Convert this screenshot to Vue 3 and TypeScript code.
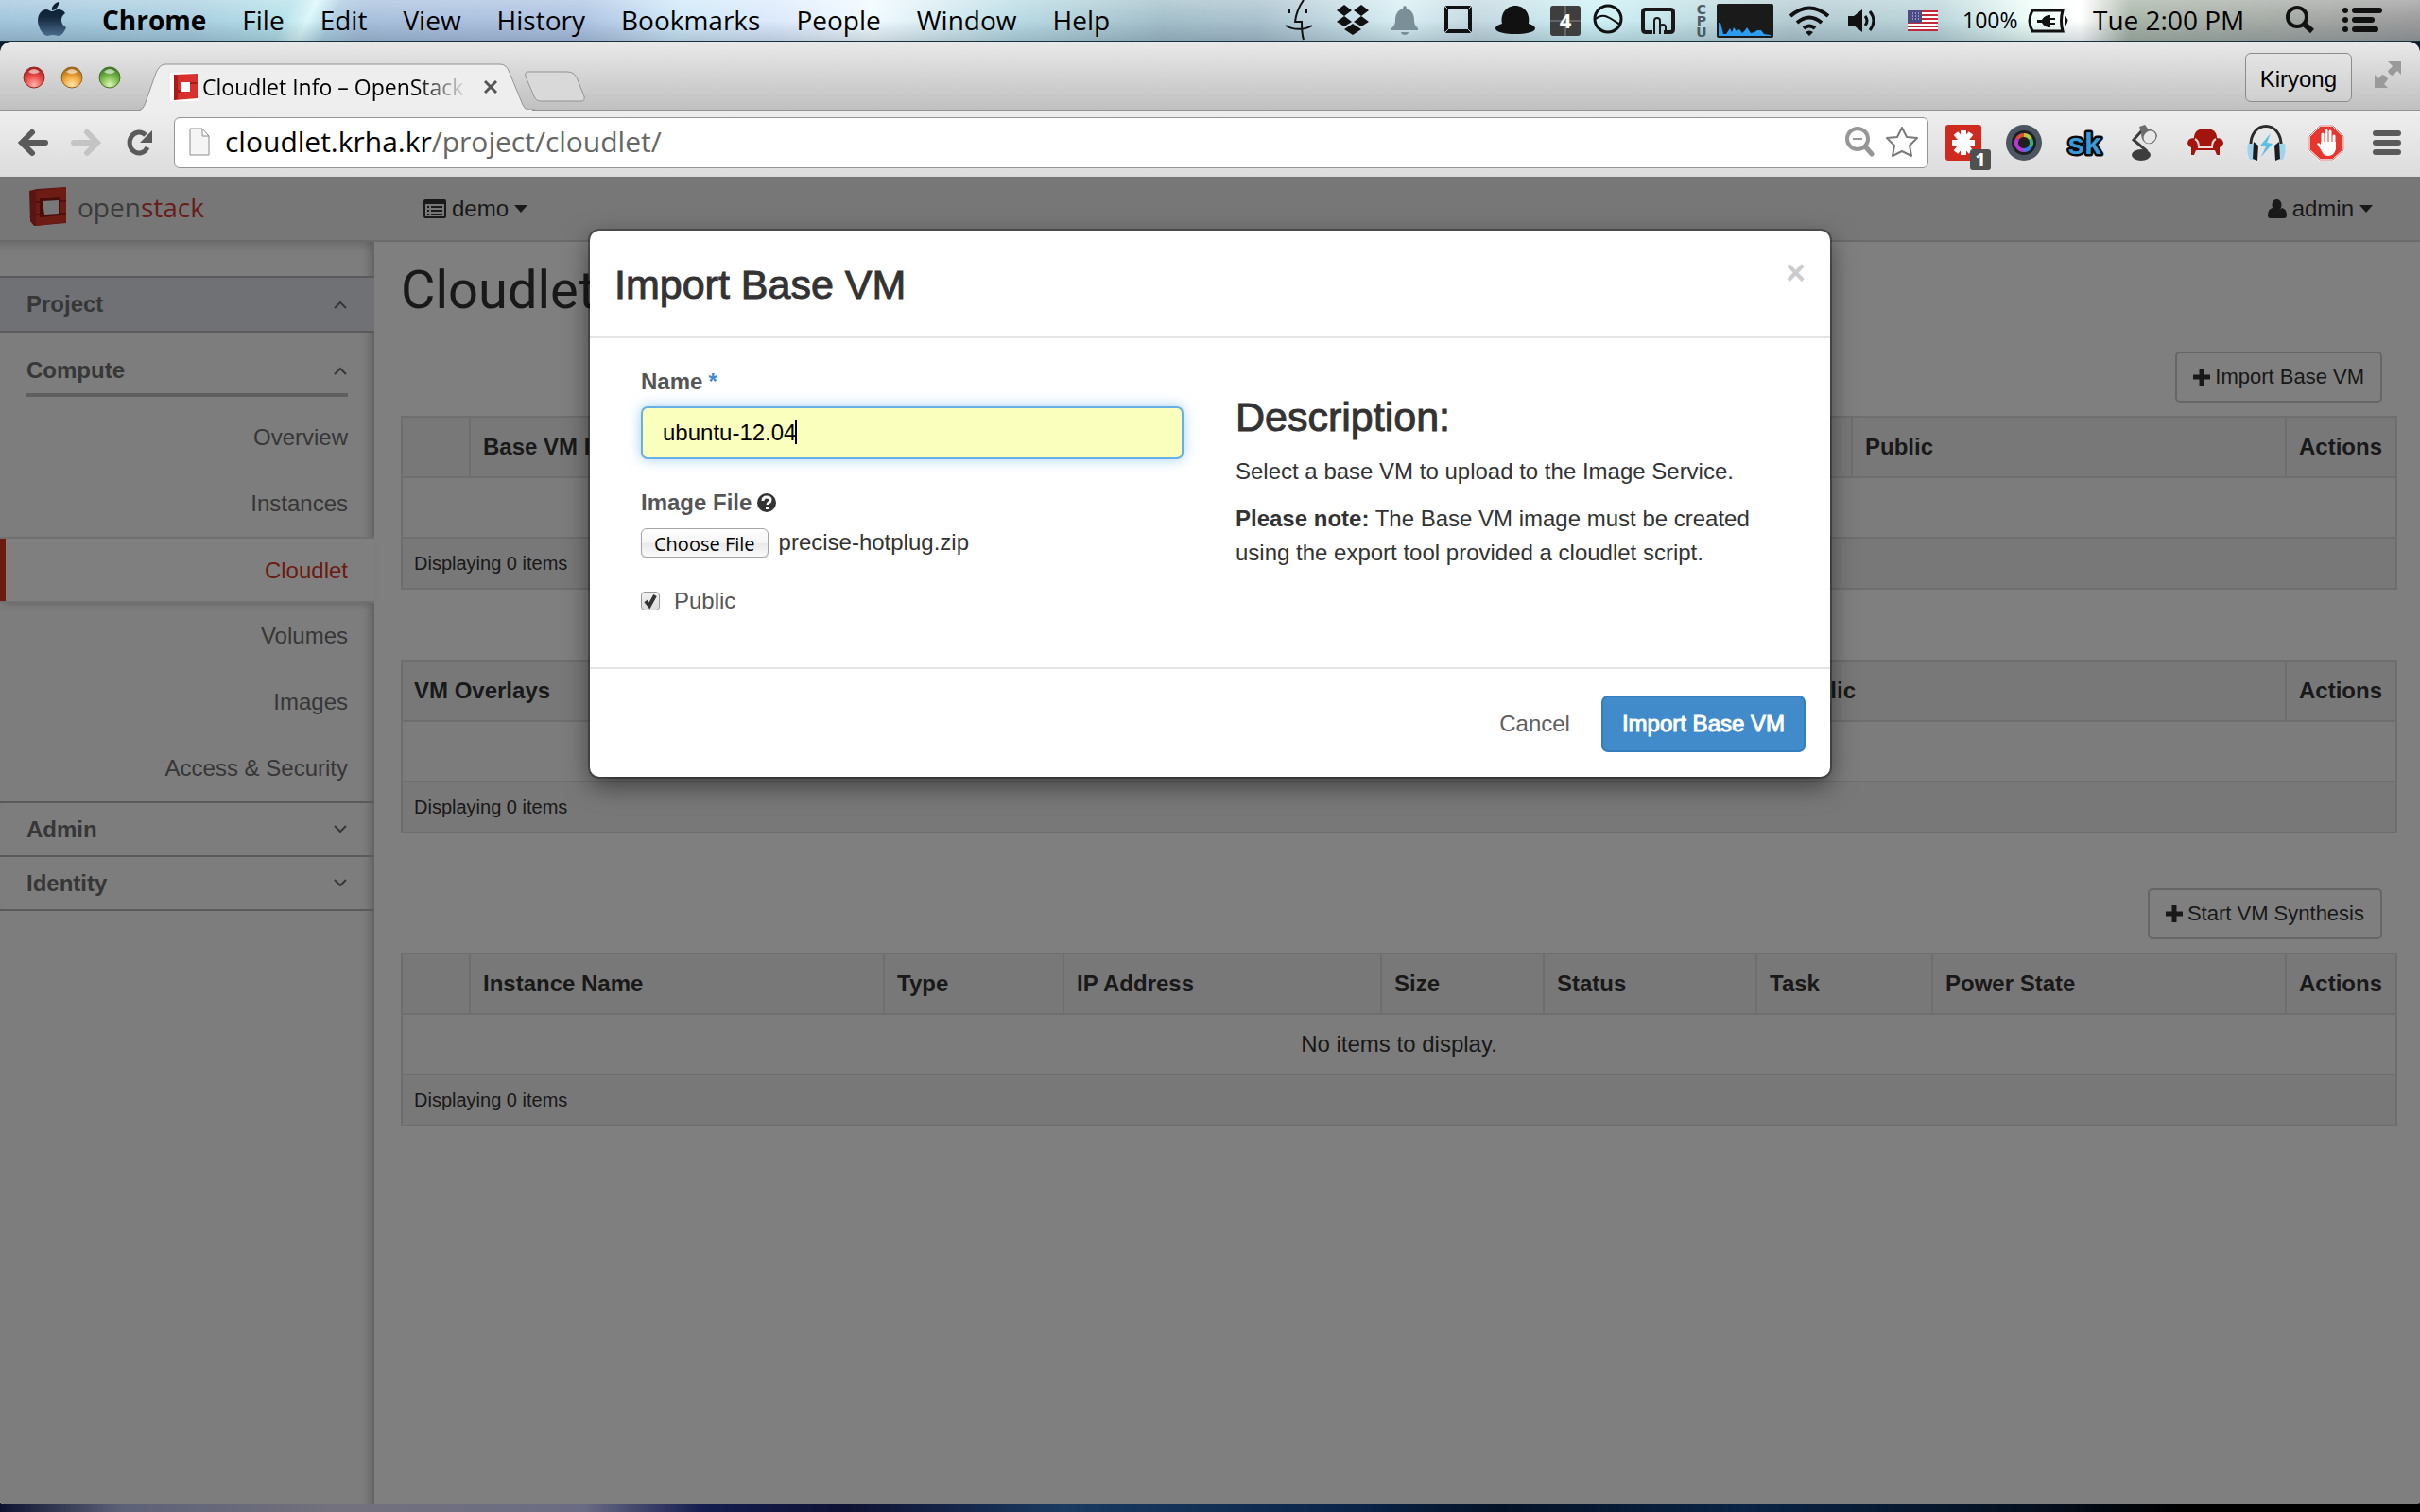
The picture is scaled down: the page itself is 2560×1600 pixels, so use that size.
<script setup lang="ts">
import { ref } from 'vue'

interface Column {
  label: string
  width?: number
}

interface DataTable {
  id: string
  action?: string
  message?: string
  columns: Column[]
}

const menus: string[] = ['File', 'Edit', 'View', 'History', 'Bookmarks', 'People', 'Window', 'Help']

const links: string[] = ['Overview', 'Instances', 'Cloudlet', 'Volumes', 'Images', 'Access & Security']
const activeLink = ref('Cloudlet')

const tables: DataTable[] = [
  {
    id: 'base',
    action: 'Import Base VM',
    columns: [
      { label: '', width: 70 },
      { label: 'Base VM Info' },
      { label: 'Public', width: 459 },
      { label: 'Actions', width: 117 },
    ],
  },
  {
    id: 'overlays',
    columns: [{ label: 'VM Overlays' }, { label: 'Public', width: 541 }, { label: 'Actions', width: 117 }],
  },
  {
    id: 'instances',
    action: 'Start VM Synthesis',
    message: 'No items to display.',
    columns: [
      { label: '', width: 70 },
      { label: 'Instance Name' },
      { label: 'Type', width: 190 },
      { label: 'IP Address', width: 336 },
      { label: 'Size', width: 172 },
      { label: 'Status', width: 225 },
      { label: 'Task', width: 186 },
      { label: 'Power State', width: 374 },
      { label: 'Actions', width: 117 },
    ],
  },
]

const vmName = ref('ubuntu-12.04')
const fileName = ref('precise-hotplug.zip')
const isPublic = ref(true)
const filePicker = ref<HTMLInputElement | null>(null)

function pickFile(): void {
  filePicker.value?.click()
}

function onFile(event: Event): void {
  const files = (event.target as HTMLInputElement).files
  if (files && files.length > 0) fileName.value = files[0].name
}
</script>

<template>
  <div class="desktop">
    <header class="menubar">
      <svg class="apple" width="108" height="43" viewBox="0 0 108 43" aria-hidden="true">
        <defs>
          <linearGradient id="appleFill" x1="0" y1="0" x2="0" y2="1">
            <stop offset="0" stop-color="#0b1d30" />
            <stop offset="0.45" stop-color="#13283d" />
            <stop offset="1" stop-color="#4a6c8c" />
          </linearGradient>
        </defs>
        <path fill="url(#appleFill)" d="M62 2c1 4-3 9-7 9-1-4 3-8 7-9zM55 12c2 0 4-2 7-2 3 0 5 1 7 4-6 4-5 12 1 15-2 5-5 9-8 9-2 0-4-1-6-1-3 0-4 1-6 1-4 0-10-9-10-16 0-8 5-12 9-12 2 0 4 2 6 2z" />
      </svg>
      <nav class="menus">
        <span class="app-name">Chrome</span>
        <span v-for="menu in menus" :key="menu">{{ menu }}</span>
      </nav>
      <div class="status">
        <svg width="52" height="43" viewBox="1350 0 52 43" fill="none" stroke="#111" stroke-width="2">
          <path d="M1379 0c-5 7-8 14-9 23h7c0 7 0 13 2 19M1364 9v5M1382 9v5M1360 27c8 5 20 5 28 0" />
        </svg>
        <svg width="58" height="43" viewBox="1402 0 58 43" fill="#111">
          <path d="M1422 5l8 6-8 6-8-6zM1440 5l8 6-8 6-8-6zM1422 17l8 6-8 5-8-5zM1440 17l8 6-8 5-8-5zM1431 25l9 6-9 6-9-6z" />
        </svg>
        <svg width="54" height="43" viewBox="1460 0 54 43" fill="#7b8f99">
          <path d="M1486 6c1 0 2 1 2 3 6 2 8 7 8 12 0 4 1 6 4 9v2h-28v-2c3-3 4-5 4-9 0-5 2-10 8-12 0-2 1-3 2-3zM1482 34h8c0 4-8 4-8 0z" />
        </svg>
        <svg width="56" height="43" viewBox="1514 0 56 43" fill="none" stroke="#111" stroke-width="4">
          <rect x="1530" y="8" width="25" height="25" rx="1" />
          <path d="M1528 6l5 5M1557 6l-5 5M1528 35l5-5M1557 35l-5-5" stroke="#b9cdd4" stroke-width="1" />
        </svg>
        <svg width="62" height="43" viewBox="1570 0 62 43" fill="#111">
          <path d="M1589 25c-2-10 4-19 14-19s16 9 14 19c4 1 7 3 7 5 0 8-42 8-42 0 0-2 3-4 7-5z" />
        </svg>
        <svg width="48" height="43" viewBox="1632 0 48 43">
          <rect x="1640" y="6" width="32" height="32" rx="3" fill="#3e3e3e" />
          <path d="M1656 6v32M1640 22h32" stroke="#8a8a8a" />
          <text x="1656" y="30" text-anchor="middle" fill="#fff" font-family="Open Sans, sans-serif" font-weight="700" font-size="22">4</text>
        </svg>
        <svg width="46" height="43" viewBox="1680 0 46 43" fill="none" stroke="#111" stroke-width="3">
          <circle cx="1701" cy="20" r="14" />
          <path d="M1688 20c8-8 16 0 26 6" stroke-width="2" />
        </svg>
        <svg width="56" height="43" viewBox="1726 0 56 43" fill="none" stroke="#1a1718" stroke-width="4">
          <path d="M1748 34h-7q-3 0-3-3v-18q0-3 3-3h26q3 0 3 3v18q0 3-3 3h-7" />
          <path d="M1750 36v-14q0-3 3-3t3 3v14v-7q0-3 3-3t3 3v7" stroke-width="2" />
        </svg>
        <svg width="30" height="43" viewBox="1782 0 30 43" fill="#4f5c62" font-family="DejaVu Sans, sans-serif" font-weight="700" font-size="14" text-anchor="middle">
          <text x="1800" y="15">C</text>
          <text x="1800" y="27">P</text>
          <text x="1800" y="39">U</text>
        </svg>
        <svg width="72" height="43" viewBox="1812 0 72 43">
          <rect x="1816" y="4" width="60" height="36" rx="2" fill="#1a1a1a" />
          <path fill="#2a9df0" d="M1818 38v-14h2l3 12h3l4-6 2 4 2-5 3 4 3-2 3 4 3-3 2-3 4 6 4-1 3-2h4l3 4 7 1v1z" />
        </svg>
        <svg width="62" height="43" viewBox="1884 0 62 43" fill="none" stroke="#111" stroke-width="4">
          <path d="M1894 17q20-17 40 0M1901 24q13-11 26 0M1908 30q6-5 12 0" />
          <path d="M1910 34q4-3 8 0l-4 4z" fill="#111" stroke="none" />
        </svg>
        <svg width="54" height="43" viewBox="1946 0 54 43">
          <path fill="#111" d="M1955 17h6l9-7v24l-9-7h-6z" />
          <path fill="none" stroke="#111" stroke-width="3" d="M1973 17q4 5 0 10M1978 12q8 10 0 20" />
        </svg>
        <svg width="68" height="43" viewBox="2000 0 68 43">
          <rect x="2018" y="11" width="32" height="22" fill="#fff" />
          <path d="M2018 12h32M2018 16h32M2018 20h32M2018 24h32M2018 28h32M2018 32h32" stroke="#c22a3a" stroke-width="2" />
          <rect x="2018" y="11" width="15" height="13" fill="#4a4d85" />
          <path d="M2020 14h12M2020 17h12M2020 20h12" stroke="#dfe1f2" stroke-dasharray="1 2" />
        </svg>
        <span class="percent">100%</span>
        <svg width="60" height="43" viewBox="2140 0 60 43">
          <path fill="none" stroke="#111" stroke-width="3" d="M2150 11h32q-3 11 0 22h-32q-6-11 0-22z" />
          <path fill="#111" d="M2184 17q7 5 0 10zM2155 21h5q2-4 7-5h2v3h5v2h-5v3h5v2h-5v3h-2q-5-1-7-5h-5z" />
        </svg>
        <span class="clock">Tue 2:00 PM</span>
        <svg width="60" height="43" viewBox="2400 0 60 43" fill="none" stroke="#111">
          <circle cx="2430" cy="18" r="10" stroke-width="4" />
          <path d="M2437 25l9 8" stroke-width="6" />
        </svg>
        <svg width="100" height="43" viewBox="2460 0 100 43" fill="none" stroke="#111" stroke-width="6" stroke-linecap="round">
          <path d="M2481 11h0M2491 11h26M2481 21h0M2491 21h18M2481 31h0M2491 31h22" />
        </svg>
      </div>
    </header>

    <div class="window">
      <div class="tabstrip">
        <svg width="148" height="73" viewBox="0 0 148 73" aria-hidden="true">
          <defs>
            <radialGradient id="lightRed" cx="0.5" cy="0.85" r="0.8"><stop offset="0" stop-color="#ffb3ae" /><stop offset="0.5" stop-color="#f0504b" /><stop offset="1" stop-color="#a8201c" /></radialGradient>
            <radialGradient id="lightAmber" cx="0.5" cy="0.85" r="0.8"><stop offset="0" stop-color="#ffe6a8" /><stop offset="0.5" stop-color="#f2a93e" /><stop offset="1" stop-color="#a8690f" /></radialGradient>
            <radialGradient id="lightGreen" cx="0.5" cy="0.85" r="0.8"><stop offset="0" stop-color="#dcf5b8" /><stop offset="0.5" stop-color="#80c052" /><stop offset="1" stop-color="#3f7d22" /></radialGradient>
          </defs>
          <circle cx="36" cy="38" r="11" fill="url(#lightRed)" stroke="#8f2a26" />
          <circle cx="76" cy="38" r="11" fill="url(#lightAmber)" stroke="#8f6226" />
          <circle cx="116" cy="38" r="11" fill="url(#lightGreen)" stroke="#47702c" />
          <path fill="#fff" fill-opacity="0.6" d="M30 32q6-6 12 0-6 4-12 0zM70 32q6-6 12 0-6 4-12 0zM110 32q6-6 12 0-6 4-12 0z" />
        </svg>
        <div class="tab">
          <svg class="tab-shape" width="418" height="50" viewBox="0 0 418 50" aria-hidden="true">
            <path fill="#eee" stroke="#949494" d="M-1 49h1q3 0 5-5l12-34q4-9 10-9h354q7 0 10 9l14 34q2 5 6 5h10" />
            <path fill="#eee" d="M1 50h414v-1h-414z" />
          </svg>
          <svg class="favicon" width="30" height="30" viewBox="0 0 30 30" aria-hidden="true">
            <path fill="#fff" d="M0 0h30v30h-30z" />
            <path fill="#d8302c" d="M4 2l25-1v26l-25 2z" />
            <path fill="#a81d1c" d="M4 2l4 1v25l-4 1zM8 18h4v3h-4zM20 10h9v2h-9z" />
            <path fill="#fff" d="M12 10h9v10h-9z" />
          </svg>
          <span class="tab-title">Cloudlet Info – OpenStack</span>
          <button class="tab-close" type="button" aria-label="Close tab">
            <svg width="14" height="14" viewBox="0 0 14 14"><path d="M1 1l12 12M13 1L1 13" stroke="#555" stroke-width="3" /></svg>
          </button>
        </div>
        <button class="new-tab" type="button" aria-label="New tab">
          <svg width="66" height="34" viewBox="0 0 66 34"><path fill="#d9d9d9" stroke="#939393" stroke-width="1" d="M4 1h42q7 0 10 6l8 20q1 5-3 5h-43q-5 0-7-5l-9-21q-1-5 2-5z" /></svg>
        </button>
        <div class="strip-end">
          <button class="profile" type="button">Kiryong</button>
          <svg width="28" height="28" viewBox="0 0 28 28" fill="#9a9a9a" aria-hidden="true">
            <path d="M14 0h14v14l-4-4-5 5q-4-1-5-5l5-5zM0 28v-14l4 4 4-4q5 1 6 5l-4 5 4 4z" />
          </svg>
        </div>
      </div>

      <div class="toolbar">
        <svg width="164" height="70" viewBox="0 0 164 70" fill="none" stroke-width="6" stroke-linecap="round" aria-hidden="true">
          <path stroke="#5a5a5a" d="M48 34h-24M34 23l-11 11 11 11" />
          <path stroke="#c4c4c4" d="M78 34h24M92 23l11 11-11 11" />
          <path stroke="#5a5a5a" stroke-width="5" stroke-linecap="butt" d="M156 39a10 11 0 1 1-2-13" />
          <path fill="#5a5a5a" d="M161 21v13h-13z" />
        </svg>
        <label class="omnibox">
          <svg width="22" height="30" viewBox="0 0 22 30" aria-hidden="true"><path fill="#f5f5f5" stroke="#8c8c8c" d="M1 1h13l7 8v20h-20zM14 1v8h7" /></svg>
          <span class="url"><span class="host">cloudlet.krha.kr</span>/project/cloudlet/</span>
          <svg class="omni-icons" width="80" height="32" viewBox="0 0 80 32" fill="none" aria-hidden="true">
            <circle cx="14" cy="13" r="11" stroke="#969696" stroke-width="4" />
            <path d="M9 13h10" stroke="#969696" stroke-width="2" />
            <path d="M22 21l7 8" stroke="#969696" stroke-width="5" stroke-linecap="round" />
            <path d="M61 1l5 10 11 1-8 8 2 11-10-5-10 5 2-11-8-8 11-1z" stroke="#7a7a7a" stroke-width="2" stroke-linejoin="round" />
          </svg>
        </label>
        <svg class="extensions" width="512" height="70" viewBox="2045 117 512 70" aria-hidden="true">
          <rect x="2058" y="132" width="38" height="38" rx="3" fill="#cf2a20" />
          <path d="M2077 138v26M2065 151h24M2069 141l16 20M2085 141l-16 20" stroke="#fff" stroke-width="6" />
          <rect x="2084" y="158" width="22" height="22" rx="3" fill="#505050" />
          <text x="2095" y="176" text-anchor="middle" fill="#fff" font-family="Open Sans, sans-serif" font-weight="700" font-size="20">1</text>
          <circle cx="2141" cy="151" r="19" fill="#4c5560" />
          <circle cx="2141" cy="151" r="13" fill="#1d1f24" />
          <g fill="none" stroke-width="4">
            <path stroke="#e04a3a" d="M2134 147a8 8 0 0 1 7-4" />
            <path stroke="#b9c93a" d="M2141 143a8 8 0 0 1 7 4" />
            <path stroke="#32b46a" d="M2148 147a8 8 0 0 1 0 8" />
            <path stroke="#3a7be0" d="M2148 155a8 8 0 0 1-7 4" />
            <path stroke="#b43ad0" d="M2141 159a8 8 0 0 1-7-12" />
          </g>
          <text x="2205" y="163" text-anchor="middle" fill="#3a9ad9" stroke="#0a0a0a" stroke-width="5" stroke-linejoin="round" paint-order="stroke" font-family="Liberation Sans, sans-serif" font-weight="700" font-size="32">sk</text>
          <ellipse cx="2265" cy="164" rx="10" ry="6" fill="#3d3d3d" />
          <path d="M2265 162l5-3-13-11 9-10" fill="none" stroke="#3d3d3d" stroke-width="3" />
          <path fill="#6c6c6c" d="M2263 134l6-2 3 4q10 2 10 8-1 4-4 7-6 3-10-1-3-3-3-10z" />
          <ellipse cx="2274" cy="145" rx="6" ry="7" fill="#e8e8e8" transform="rotate(40 2274 145)" />
          <path fill="#a3140c" d="M2321 146q0-10 12-10t12 10q7 0 7 6-1 3-4 4v8h-3l-2-5h-20l-2 5h-3v-8q-3-1-4-4 0-6 7-6z" />
          <path d="M2322 147q4 2 4 9h14q0-7 4-9" fill="none" stroke="#f1d9d7" stroke-width="2" />
          <path d="M2381 156c-2-30 34-30 32 0" fill="none" stroke="#2b2b2b" stroke-width="3" />
          <path fill="#9fd3ee" d="M2378 152h6v17h-4q-4-8-2-17zM2411 152h6q2 9-2 17h-4z" />
          <path fill="#1c1c1c" d="M2384 150l5 4-1 16-5-2zM2411 150l-5 4 1 16 5-2z" />
          <path fill="#5bbfe6" d="M2402 141l-11 13 6 1-5 11 12-14-6-1z" />
          <path fill="#e8352e" stroke="#fff" stroke-width="2" d="M2454 133h14l11 11v15l-11 10h-14l-11-10v-15z" />
          <path d="M2454 133h14l11 11v15l-11 10h-14l-11-10v-15z" fill="none" stroke="#d8776f" />
          <path d="M2457 154v-12M2461 152v-14M2465 152v-13M2469 154v-10" stroke="#fff" stroke-width="3" stroke-linecap="round" />
          <path fill="#fff" d="M2455 150h16v8q-2 7-8 7-5 0-7-5l-5-8q2-2 4 1z" />
          <path d="M2513 141h24M2513 151h24M2513 161h24" stroke="#5a5a5a" stroke-width="6" stroke-linecap="round" />
        </svg>
      </div>

      <div class="page">
        <div class="navbar">
          <a class="brand" href="#">
            <svg width="42" height="42" viewBox="0 0 42 42" aria-hidden="true">
              <path fill="#8a8a8a" d="M1 31l6-2v9z" />
              <path fill="#b32a22" d="M1 4l8-2 31-2v38l-34 3-4-5z" />
              <path fill="#d8362b" d="M8 4l32-4v37l-32 4z" />
              <path fill="#a81f18" d="M8 15h6v2h-6zM8 28h6v2h-6zM32 14h8v2h-8zM32 27h8v2h-8z" />
              <path fill="#8f1b15" d="M12 12l22-2v20l-22 2z" />
              <path fill="#f0f0f0" d="M15 15l17-1v14l-15 1z" />
            </svg>
            <span class="brand-name">open<span class="brand-red">stack</span></span>
          </a>
          <button class="nav-menu project-menu" type="button">
            <svg width="24" height="20" viewBox="0 0 24 20" aria-hidden="true">
              <path fill="#333" fill-rule="evenodd" d="M2 0h20q2 0 2 2v16q0 2-2 2H2q-2 0-2-2V2q0-2 2-2zM2 5v13h20V5z" />
              <path d="M4 8h2M8 8h12M4 12h2M8 12h12M4 16h2M8 16h12" stroke="#333" stroke-width="2" />
            </svg>
            demo
            <span class="caret"></span>
          </button>
          <button class="nav-menu user-menu" type="button">
            <svg width="20" height="20" viewBox="0 0 20 20" fill="#333" aria-hidden="true">
              <path d="M10 0a5 6 0 1 1-1 0zM5 9q5 5 10 0 5 1 5 8 0 3-3 3H3q-3 0-3-3 0-7 5-8z" />
            </svg>
            admin
            <span class="caret"></span>
          </button>
        </div>

        <div class="columns">
          <aside class="sidebar">
            <button class="group open" type="button">
              Project
              <svg width="14" height="9" viewBox="0 0 14 9" fill="none" stroke="#6e6e6e" stroke-width="2"><path d="M1 8l6-6 6 6" /></svg>
            </button>
            <button class="panel" type="button">
              Compute
              <svg width="14" height="9" viewBox="0 0 14 9" fill="none" stroke="#6e6e6e" stroke-width="2"><path d="M1 8l6-6 6 6" /></svg>
            </button>
            <nav class="links">
              <a
                v-for="link in links"
                :key="link"
                href="#"
                :class="{ active: link === activeLink }"
                @click.prevent="activeLink = link"
              >{{ link }}</a>
            </nav>
            <button v-for="group in ['Admin', 'Identity']" :key="group" class="group" type="button">
              {{ group }}
              <svg width="14" height="9" viewBox="0 0 14 9" fill="none" stroke="#6e6e6e" stroke-width="2"><path d="M1 1l6 6 6-6" /></svg>
            </button>
          </aside>

          <main class="content">
            <h1>Cloudlet Info</h1>
            <section v-for="table in tables" :key="table.id" class="block">
              <div v-if="table.action" class="actions">
                <button class="btn-small" type="button">
                  <svg width="18" height="18" viewBox="0 0 18 18" aria-hidden="true"><path d="M9 0v18M0 9h18" stroke="#333" stroke-width="5" /></svg>
                  {{ table.action }}
                </button>
              </div>
              <table>
                <colgroup>
                  <col v-for="(column, i) in table.columns" :key="i" :style="column.width ? { width: column.width + 'px' } : {}" />
                </colgroup>
                <thead>
                  <tr>
                    <th v-for="(column, i) in table.columns" :key="i" scope="col">{{ column.label }}</th>
                  </tr>
                </thead>
                <tbody>
                  <tr>
                    <td :colspan="table.columns.length">{{ table.message }}</td>
                  </tr>
                </tbody>
                <tfoot>
                  <tr>
                    <td :colspan="table.columns.length">Displaying 0 items</td>
                  </tr>
                </tfoot>
              </table>
            </section>
          </main>
        </div>

        <div class="backdrop">
          <form class="modal" role="dialog" aria-labelledby="modal-title" @submit.prevent>
            <div class="modal-header">
              <h2 id="modal-title">Import Base VM</h2>
              <button class="close" type="button" aria-label="Close">×</button>
            </div>
            <div class="modal-body">
              <div class="fields">
                <label class="field-label" for="vm-name">Name <span class="required">*</span></label>
                <div class="text-field">
                  <input id="vm-name" v-model="vmName" type="text" />
                  <span class="cursor"></span>
                </div>
                <label class="field-label" for="vm-file">
                  Image File
                  <svg width="20" height="20" viewBox="0 0 20 20" aria-hidden="true">
                    <circle cx="10" cy="10" r="10" fill="#333" />
                    <path d="M6 8q0-4 4-4t4 3q0 2-2 3-1 1-1 2" fill="none" stroke="#fff" stroke-width="3" />
                    <path d="M9 14h3v3h-3z" fill="#fff" />
                  </svg>
                </label>
                <div class="file-row">
                  <input id="vm-file" ref="filePicker" type="file" hidden @change="onFile" />
                  <button class="choose" type="button" @click="pickFile">Choose File</button>
                  <span>{{ fileName }}</span>
                </div>
                <label class="check-row">
                  <span class="check">
                    <input v-model="isPublic" type="checkbox" />
                    <svg v-if="isPublic" width="20" height="20" viewBox="0 0 20 20" aria-hidden="true"><path d="M5 10l4 5 6-11" fill="none" stroke="#333" stroke-width="4" /></svg>
                  </span>
                  Public
                </label>
              </div>
              <div class="description">
                <h3>Description:</h3>
                <p>Select a base VM to upload to the Image Service.</p>
                <p><strong>Please note:</strong> The Base VM image must be created using the export tool provided a cloudlet script.</p>
              </div>
            </div>
            <div class="modal-footer">
              <button class="cancel" type="button">Cancel</button>
              <button class="primary" type="submit">Import Base VM</button>
            </div>
          </form>
        </div>
      </div>
    </div>
    <div class="wallpaper"></div>
  </div>
</template>

<style>
body {
  margin: 0;
}
</style>

<style scoped>
* {
  box-sizing: border-box;
}

svg {
  display: block;
  flex: none;
}

button {
  margin: 0;
  padding: 0;
  border: 0;
  background: none;
  color: inherit;
  font: inherit;
}

.desktop {
  display: flex;
  flex-direction: column;
  min-height: 100vh;
  background: #0c1a2e;
  color: #333;
  font: 24px/36px "Liberation Sans", Arial, sans-serif;
}

/* Menu bar */
.menubar {
  display: flex;
  height: 44px;
  border-bottom: 1px solid #16303c;
  background:
    linear-gradient(rgba(255, 255, 255, 0.25), rgba(255, 255, 255, 0) 50%, rgba(30, 50, 70, 0.18)),
    linear-gradient(115deg, transparent 12%, rgba(230, 255, 255, 0.8) 13%, transparent 14%),
    linear-gradient(90deg, #a3c6dd, #a9cfe0 8%, #b5e2ea 12%, #a8c0dc 15%, #aec3e2 24%, #cfe8f8 28%, #dceafc 32%, #f2fbff 36%, #b9dbe4 42%, #a3bfca 48%, #a9c1cd 52%, #d8eff4 58%, #c4d8e0 61%, #cdf1f6 66%, #b4cbd2 74%, #b9d4d9 80%, #effff9 84%, #fff 86%, #a9b5a8 88%, #a5aaa5 94%, #9c9c9c);
  color: #000;
  font: 28px/42px "Open Sans", "Noto Sans", sans-serif;
}

.menus {
  display: flex;
  gap: 38px;
}

.app-name {
  font-weight: 700;
}

.status {
  display: flex;
  margin-left: auto;
}

.percent {
  width: 72px;
  padding-left: 8px;
  font-size: 23px;
}

.clock {
  width: 200px;
  padding-left: 14px;
}

/* Browser chrome */
.window {
  display: flex;
  flex: 1;
  flex-direction: column;
  overflow: hidden;
  border-radius: 12px 12px 4px 4px;
}

.tabstrip {
  display: flex;
  height: 73px;
  border-bottom: 1px solid #949494;
  background: linear-gradient(#e9e9e9, #c0c0c0);
}

.tab {
  position: relative;
  display: flex;
  align-items: center;
  width: 418px;
  height: 50px;
  margin-top: 23px;
  padding-left: 32px;
}

.tab-shape {
  position: absolute;
  inset: 0;
}

.favicon,
.tab-title,
.tab-close {
  position: relative;
}

.tab-title {
  width: 282px;
  margin: 0 16px 0 4px;
  overflow: hidden;
  color: #000;
  font: 23px/32px "Open Sans", "Noto Sans", sans-serif;
  white-space: nowrap;
  mask-image: linear-gradient(90deg, #000 80%, transparent);
}

.new-tab {
  align-self: flex-start;
  margin: 31px 0 0 -12px;
}

.strip-end {
  display: flex;
  gap: 24px;
  align-items: flex-start;
  margin-left: auto;
  padding: 12px 20px 0 0;
}

.strip-end svg {
  margin-top: 9px;
}

.profile {
  height: 52px;
  padding: 4px 15px 0;
  border: 1px solid #8c8c8c;
  border-radius: 6px;
  background: linear-gradient(#e4e4e4, #cfcfcf);
  color: #000;
}

.toolbar {
  display: flex;
  align-items: center;
  height: 70px;
  padding-right: 3px;
  background: linear-gradient(#eee, #dcdcdc);
}

.omnibox {
  display: flex;
  flex: 1;
  align-items: center;
  height: 54px;
  margin: 0 5px 2px 20px;
  padding: 0 8px 2px 15px;
  border: 1px solid #949494;
  border-radius: 6px;
  background: #fff;
}

.url {
  margin-left: 16px;
  color: #666;
  font: 30px/42px "Open Sans", "Noto Sans", sans-serif;
}

.host {
  color: #000;
}

.omni-icons {
  margin-left: auto;
}

/* Page */
.page {
  position: relative;
  display: flex;
  flex: 1;
  flex-direction: column;
  background: #fff;
}

.navbar {
  display: flex;
  align-items: center;
  height: 69px;
  padding: 0 50px 0 30px;
  border-bottom: 2px solid #d4d4d4;
  background: #eee;
}

.brand {
  display: flex;
  gap: 10px;
  align-items: center;
  width: 418px;
  margin-bottom: 4px;
  color: #777;
  font-family: "Open Sans", sans-serif;
  font-size: 28px;
  text-decoration: none;
}

.brand-red {
  color: #d03a30;
}

.nav-menu {
  display: flex;
  gap: 6px;
  align-items: center;
}

.user-menu {
  margin-left: auto;
}

.caret {
  border: 7px solid transparent;
  border-top: 8px solid #333;
  border-bottom: 0;
}

.columns {
  display: flex;
  flex: 1;
}

.sidebar {
  display: flex;
  flex: none;
  flex-direction: column;
  width: 396px;
  padding-top: 36px;
  background: #fafafa;
  box-shadow:
    inset -2px 0 #ccc,
    inset -12px 0 10px -8px rgba(0, 0, 0, 0.25),
    inset 0 12px 10px -8px rgba(0, 0, 0, 0.15);
  color: #6e6e6e;
}

.group {
  display: flex;
  align-items: center;
  justify-content: space-between;
  height: 57px;
  padding: 0 29px 0 28px;
  border-top: 2px solid #b4b4b4;
  font-weight: 700;
}

.group:last-child {
  height: 59px;
  border-bottom: 2px solid #b4b4b4;
}

.group.open {
  height: 60px;
  border-bottom: 2px solid #b4b4b4;
  background: #dee2e8;
}

.panel {
  display: flex;
  align-items: center;
  justify-content: space-between;
  height: 68px;
  margin: 0 28px;
  padding-top: 16px;
  padding-right: 1px;
  border-bottom: 4px solid #bfbfbf;
  font-weight: 700;
}

.links {
  display: flex;
  flex-direction: column;
  margin-top: 8px;
}

.links a {
  height: 70px;
  padding-right: 28px;
  color: #6e6e6e;
  line-height: 70px;
  text-align: right;
  text-decoration: none;
}

.links a.active {
  border: solid #e0e0e0;
  border-width: 2px 0;
  background: linear-gradient(90deg, #d93622 6px, #fff 6px);
  box-shadow: 0 4px 8px -4px rgba(0, 0, 0, 0.25);
  color: #d93622;
  line-height: 68px;
}

.content {
  flex: 1;
  min-width: 0;
  padding: 20px 24px 0 28px;
}

h1 {
  margin: 0 0 34px;
  font: 400 56px/62px Roboto, sans-serif;
}

.block {
  margin-bottom: 58px;
}

.block:nth-of-type(1) {
  margin-bottom: 74px;
}

.actions {
  display: flex;
  justify-content: flex-end;
  padding: 0 16px 14px 0;
}

.btn-small {
  display: flex;
  gap: 5px;
  align-items: center;
  height: 54px;
  padding: 0 17px;
  border: 2px solid #ccc;
  border-radius: 5px;
  background: #fff;
  font-size: 22px;
}

table {
  width: 100%;
  border: 2px solid #ddd;
  border-spacing: 0;
  table-layout: fixed;
}

th {
  height: 64px;
  padding: 0 8px 0 13px;
  border-bottom: 2px solid #ddd;
  border-left: 2px solid #ddd;
  background: #f0f0f0;
  text-align: left;
}

th:first-child {
  padding-left: 12px;
  border-left: 0;
}

tbody td {
  height: 64px;
  padding: 0;
  border-bottom: 2px solid #ddd;
  background: #f9f9f9;
  text-align: center;
}

tfoot td {
  height: 52px;
  padding: 0 12px;
  background: #f0f0f0;
  font-size: 20px;
}

/* Modal */
.backdrop {
  position: absolute;
  inset: 0;
  display: flex;
  align-items: flex-start;
  justify-content: center;
  padding-top: 57px;
  background: rgba(0, 0, 0, 0.5);
}

.modal {
  width: 1312px;
  border-radius: 10px;
  background: #fff;
  box-shadow:
    0 0 0 2px rgba(0, 0, 0, 0.3),
    0 9px 27px rgba(0, 0, 0, 0.5);
}

.modal-header {
  display: flex;
  align-items: flex-start;
  justify-content: space-between;
  height: 114px;
  padding: 27px 26px 0;
  border-bottom: 2px solid #e5e5e5;
}

h2,
h3 {
  margin: 0;
  font-size: 43px;
  font-weight: 400;
  line-height: 60px;
  -webkit-text-stroke: 1px currentColor;
}

.close {
  color: #ccc;
  font-size: 36px;
  font-weight: 700;
}

.modal-body {
  display: flex;
  gap: 55px;
  height: 350px;
  padding: 28px 54px 0;
  border-bottom: 2px solid #e5e5e5;
}

.fields {
  display: flex;
  flex: none;
  flex-direction: column;
  width: 574px;
}

.field-label {
  display: flex;
  gap: 6px;
  align-items: center;
  color: #555;
  font-weight: 700;
}

.required {
  color: #428bca;
}

.text-field {
  position: relative;
  margin: 8px 0 28px;
}

.text-field input {
  display: block;
  width: 100%;
  height: 56px;
  padding: 0 21px;
  border: 2px solid #66afe9;
  border-radius: 7px;
  outline: 0;
  background: #faffbd;
  box-shadow: 0 0 14px rgba(102, 175, 233, 0.6);
  color: #000;
  font: inherit;
}

.cursor {
  position: absolute;
  top: 14px;
  left: 163px;
  width: 2px;
  height: 26px;
  background: #000;
}

.file-row {
  display: flex;
  gap: 11px;
  align-items: center;
  margin-top: 6px;
}

.choose {
  height: 31px;
  padding: 4px 13px 0;
  border: 1px solid #a5a5a5;
  border-radius: 6px;
  background: linear-gradient(#fff, #f4f4f4 50%, #e9e9e9 50%, #fafafa);
  box-shadow: 0 1px 1px rgba(0, 0, 0, 0.25);
  color: #000;
  font: 20px/24px "Open Sans", "Noto Sans", sans-serif;
}

.check-row {
  display: flex;
  gap: 15px;
  align-items: center;
  margin-top: 26px;
  color: #555;
}

.check {
  position: relative;
  display: block;
}

.check input {
  display: block;
  width: 20px;
  height: 20px;
  margin: 0;
  border: 1px solid #999;
  border-radius: 4px;
  background: linear-gradient(#f0f0f0, #ddd);
  appearance: none;
}

.check svg {
  position: absolute;
  inset: 0;
}

.description {
  flex: 1;
  padding-top: 25px;
}

.description p {
  margin: 10px 0 0;
}

.description p + p {
  margin-top: 14px;
}

.modal-footer {
  display: flex;
  gap: 33px;
  align-items: center;
  justify-content: flex-end;
  height: 114px;
  padding: 2px 26px 0;
}

.cancel {
  color: #606060;
}

.primary {
  height: 60px;
  padding: 0 20px;
  border: 2px solid #357ebd;
  border-radius: 7px;
  background: #428bca;
  color: #fff;
  -webkit-text-stroke: 1px #fff;
}

.wallpaper {
  height: 8px;
  background: linear-gradient(90deg, #0e1430, #5d6178 5%, #73717d 14%, #6b6c84 24%, #141d50 29%, #0f1233 35%, #1a3a60 44%, #0a2448 56%, #041226 62%, #0a2445 72%, #051020 84%, #000 90%);
}
</style>
